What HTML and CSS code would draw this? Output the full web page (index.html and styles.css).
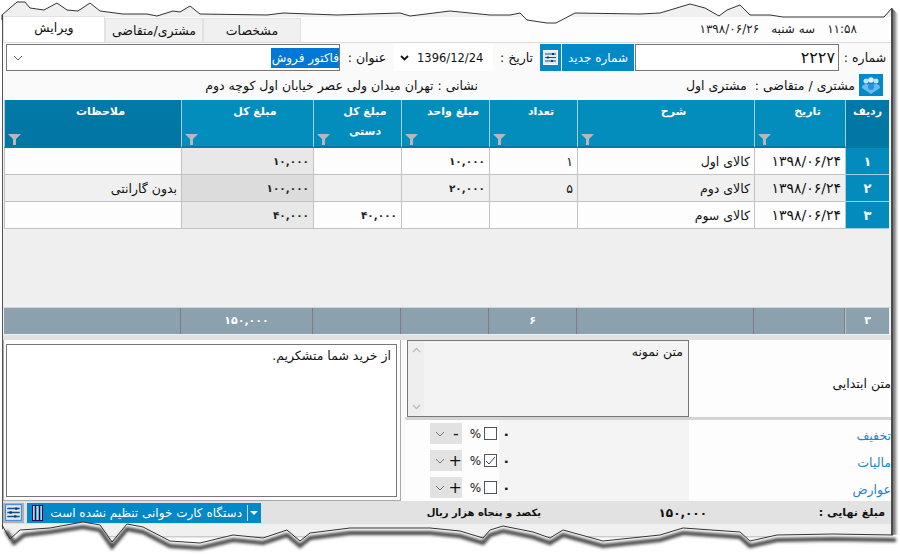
FILE: index.html
```html
<!DOCTYPE html>
<html lang="fa" dir="rtl">
<head>
<meta charset="utf-8">
<title>فاکتور فروش</title>
<link rel="stylesheet" href="styles.css">
</head>
<body>
<div class="window">
  <header class="topbar">
    <div class="clock"><span>۱۱:۵۸</span><span>سه شنبه</span><span>۱۳۹۸/۰۶/۲۶</span></div>
    <nav class="tabs">
      <div class="tab">مشخصات</div>
      <div class="tab">مشتری/متقاضی</div>
      <div class="tab tab-active">ویرایش</div>
    </nav>
  </header>

  <section class="form-row">
    <label class="lbl lbl-num">شماره :</label>
    <div class="input-num">۲۲۲۷</div>
    <button class="btn-new">شماره جدید</button>
    <button class="btn-icon"><svg width="15" height="15" viewBox="0 0 15 15"><rect x=".5" y=".5" width="14" height="14" fill="#dfeaf5" stroke="#fff"/><path d="M2 4h11M2 7.5h11M2 11h11" stroke="#1b4f7a" stroke-width="1.2"/><path d="M9 3h2v2H9zM4 6.500h2v2H4zM8 10h2v2H8z" fill="#0d3a63"/></svg></button>
    <label class="lbl lbl-date">تاریخ :</label>
    <div class="date-box"><span>1396/12/24</span><svg class="date-chev" width="9" height="6" viewBox="0 0 9 6"><path d="M1 1l3.500 3.500L8 1" fill="none" stroke="#111" stroke-width="1.800"/></svg></div>
    <label class="lbl lbl-title">عنوان :</label>
    <div class="combo"><span class="sel">فاکتور فروش</span><svg class="combo-chev" width="10" height="6" viewBox="0 0 10 6"><path d="M1 1l4 4 4-4" fill="none" stroke="#666"/></svg></div>
  </section>

  <section class="cust-row">
    <div class="cust-icon"><svg width="20" height="19" viewBox="0 0 20 19"><circle cx="5" cy="5" r="2.500" fill="#bfe6fb"/><circle cx="10" cy="4" r="2.800" fill="#d9f1ff"/><circle cx="15" cy="5" r="2.500" fill="#bfe6fb"/><path d="M1 12c0-3 2-4 4-4s4 1 5 1 3-1 5-1 4 1 4 4l-3 2-6 4-6-4z" fill="#63bdf0"/><circle cx="10" cy="11" r="3" fill="#2a8fdc"/></svg></div>
    <span class="cust-text">مشتری / متقاضی :&nbsp; مشتری اول</span>
    <span class="addr-text">نشانی : تهران میدان ولی عصر خیابان اول کوچه دوم</span>
  </section>

  <section class="grid">
    <div class="g-row g-head">
      <div class="hc hc-dark hc-idx">ردیف</div>
      <div class="hc">تاریخ<svg class="fun" width="13" height="11" viewBox="0 0 13 11"><path d="M0 0h13L8 5v6H5V5z"/></svg></div>
      <div class="hc">شرح<svg class="fun" width="13" height="11" viewBox="0 0 13 11"><path d="M0 0h13L8 5v6H5V5z"/></svg></div>
      <div class="hc">تعداد<svg class="fun" width="13" height="11" viewBox="0 0 13 11"><path d="M0 0h13L8 5v6H5V5z"/></svg></div>
      <div class="hc">مبلغ واحد<svg class="fun" width="13" height="11" viewBox="0 0 13 11"><path d="M0 0h13L8 5v6H5V5z"/></svg></div>
      <div class="hc">مبلغ کل<br>دستی<svg class="fun" width="13" height="11" viewBox="0 0 13 11"><path d="M0 0h13L8 5v6H5V5z"/></svg></div>
      <div class="hc">مبلغ کل<svg class="fun" width="13" height="11" viewBox="0 0 13 11"><path d="M0 0h13L8 5v6H5V5z"/></svg></div>
      <div class="hc hc-dark">ملاحظات<svg class="fun" width="13" height="11" viewBox="0 0 13 11"><path d="M0 0h13L8 5v6H5V5z"/></svg></div>
    </div>
    <div class="g-row g-data">
      <div class="c c-idx">۱</div><div class="c c-date">۱۳۹۸/۰۶/۲۴</div><div class="c">کالای اول</div><div class="c">۱</div><div class="c c-num">۱۰,۰۰۰</div><div class="c c-num"></div><div class="c c-calc c-num">۱۰,۰۰۰</div><div class="c"></div>
    </div>
    <div class="g-row g-data g-alt">
      <div class="c c-idx">۲</div><div class="c c-date">۱۳۹۸/۰۶/۲۴</div><div class="c">کالای دوم</div><div class="c">۵</div><div class="c c-num">۲۰,۰۰۰</div><div class="c c-num"></div><div class="c c-calc c-num">۱۰۰,۰۰۰</div><div class="c">بدون گارانتی</div>
    </div>
    <div class="g-row g-data">
      <div class="c c-idx">۳</div><div class="c c-date">۱۳۹۸/۰۶/۲۴</div><div class="c">کالای سوم</div><div class="c"></div><div class="c c-num"></div><div class="c c-num">۴۰,۰۰۰</div><div class="c c-calc c-num">۴۰,۰۰۰</div><div class="c"></div>
    </div>
    <div class="g-empty"></div>
    <div class="g-row g-foot">
      <div class="f">۳</div><div class="f"></div><div class="f"></div><div class="f">۶</div><div class="f"></div><div class="f"></div><div class="f">۱۵۰,۰۰۰</div><div class="f"></div>
    </div>
  </section>

  <div class="strip"></div>

  <section class="lower">
    <div class="lower-right">
      <div class="intro">
        <div class="intro-label">متن ابتدایی</div>
        <div class="intro-box">
          <div class="intro-text">متن نمونه</div>
          <div class="scroll"><svg width="9" height="6" viewBox="0 0 9 6"><path d="M1 5l3.500-3.500L8 5" fill="none" stroke="#bbb" stroke-width="1.400"/></svg><svg width="9" height="6" viewBox="0 0 9 6"><path d="M1 1l3.500 3.500L8 1" fill="none" stroke="#bbb" stroke-width="1.400"/></svg></div>
        </div>
      </div>
      <div class="sep"></div>
      <div class="adj">
        <a class="adj-label">تخفیف</a>
        <div class="adj-val">۰</div>
        <div class="check"></div>
        <div class="pct">%</div>
        <div class="sign-box"><span class="sign">-</span><svg width="10" height="6" viewBox="0 0 10 6"><path d="M1 1l4 4 4-4" fill="none" stroke="#777"/></svg></div>
      </div>
      <div class="adj">
        <a class="adj-label">مالیات</a>
        <div class="adj-val">۰</div>
        <div class="check"><svg width="11" height="11" viewBox="0 0 11 11"><path d="M1 6l3 3 6-7" fill="none" stroke="#444"/></svg></div>
        <div class="pct">%</div>
        <div class="sign-box"><span class="sign">+</span><svg width="10" height="6" viewBox="0 0 10 6"><path d="M1 1l4 4 4-4" fill="none" stroke="#777"/></svg></div>
      </div>
      <div class="adj">
        <a class="adj-label">عوارض</a>
        <div class="adj-val">۰</div>
        <div class="check"></div>
        <div class="pct">%</div>
        <div class="sign-box"><span class="sign">+</span><svg width="10" height="6" viewBox="0 0 10 6"><path d="M1 1l4 4 4-4" fill="none" stroke="#777"/></svg></div>
      </div>
    </div>
    <div class="lower-left">
      <div class="notes">از خرید شما متشکریم.</div>
    </div>
  </section>

  <footer class="statusbar">
    <span class="st-label">مبلغ نهایی :</span>
    <span class="st-amount">۱۵۰,۰۰۰</span>
    <span class="st-words">یکصد و پنجاه هزار ریال</span>
    <div class="st-spacer"></div>
    <div class="card">
      <span class="card-arrow"></span>
      <span class="card-text">دستگاه کارت خوانی تنظیم نشده است</span>
      <svg class="card-ico" width="11" height="16" viewBox="0 0 11 16"><rect x=".5" y=".5" width="10" height="15" fill="#8fe3f5" stroke="#2a0a45"/><path d="M3.500 0v16M7.500 0v16" stroke="#2a0a45" stroke-width="1.500"/></svg>
    </div>
    <div class="st-tool"><svg width="17" height="17" viewBox="0 0 15 15"><rect x=".5" y=".5" width="14" height="14" fill="#dfeaf5" stroke="#4c8fdc"/><path d="M2 4h11M2 7.500h11M2 11h11" stroke="#1b4f7a" stroke-width="1.200"/><path d="M9 3h2v2H9zM4 6.500h2v2H4zM8 10h2v2H8z" fill="#0d3a63"/></svg></div>
  </footer>
  <div class="below"></div>
</div>

<svg class="torn" width="900" height="554" viewBox="0 0 900 554">
  <defs><filter id="blur" x="-5%" y="-50%" width="110%" height="200%"><feGaussianBlur stdDeviation="1.500"/></filter></defs>
  <path class="rip-mask" d="M0 0H900V16L892 8L884 16L884 17L783 17L770 15L750 15L740 5L727 10L719 16L705 8L690 4L660 13L640 14L575 13L556 23L547 23L527 20L520 13L510 15L490 15L450 11L410 16L400 13L337 15L283 13L267 15L200 14L190 6L180 12L173 11L157 16L147 14L123 14L100 11L90 3L78 11L67 10L57 3L44 10L30 8L25 2L17 2L10 8L2 15L0 20Z"/>
  <path class="rip-line" d="M2 20L2 15L10 8L17 2L25 2L30 8L44 10L57 3L67 10L78 11L90 3L100 11L123 14L147 14L157 16L173 11L180 12L190 6L200 14L267 15L283 13L337 15L400 13L410 16L450 11L490 15L510 15L520 13L527 20L547 23L556 23L575 13L640 14L660 13L690 4L705 8L719 16L727 10L740 5L750 15L770 15L783 17L884 17L892 8"/>
  <path class="rip-mask" d="M0 526L10 539L20 530L50 528L83 522L100 525L112 542L127 524L143 527L170 541L200 543L233 535L263 538L287 530L300 541L310 533L350 528L430 528L460 531L483 538L490 530L503 526L533 532L550 538L563 530L603 541L660 535L683 528L740 532L750 541L777 535L833 534L893 535L900 535V554H0Z"/>
  <path class="rip-shadow" filter="url(#blur)" d="M6 531L14 543L24 535L50 532L83 527L100 530L112 547L127 529L143 532L170 546L200 548L233 540L263 543L287 535L300 546L310 538L350 533L430 533L460 536L483 543L490 535L503 531L533 537L550 543L563 535L603 546L660 540L683 533L740 537L750 546L777 540L833 539L896 540"/>
  <path class="rip-line" d="M2 525L10 539L20 530L50 528L83 522L100 525L112 542L127 524L143 527L170 541L200 543L233 535L263 538L287 530L300 541L310 533L350 528L430 528L460 531L483 538L490 530L503 526L533 532L550 538L563 530L603 541L660 535L683 528L740 532L750 541L777 535L833 534L893 535"/>
</svg>
```
FILE: styles.css
```css
* { box-sizing: border-box; }
html, body { margin: 0; padding: 0; background: #fff; }
body {
  width: 900px;
  height: 554px;
  overflow: hidden;
  position: relative;
  font-family: "DejaVu Sans", "Noto Sans", sans-serif;
  font-size: 12.500px;
  color: #111;
}
.window {
  width: 891px;
  height: 536px;
  margin-right: 7px;
  display: flex;
  flex-direction: column;
  background: #fafafa;
  border-left: 1px solid #555;
  border-right: 2px solid #4a4a4a;
  box-shadow: 3px 0 3px #777;
}
.topbar {
  height: 43px;
  flex: none;
  display: flex;
  justify-content: space-between;
  align-items: flex-end;
  background: linear-gradient(#f0f0f0 17px, #fdfdfd 17px);
  border-bottom: 1px solid #dcdcdc;
}
.clock {
  display: flex;
  gap: 12px;
  font-size: 12px;
  padding: 0 34px 6px 0;
  color: #222;
}
.tabs { display: flex; height: 26px; align-items: flex-end; }
.tab {
  width: 98px;
  height: 24px;
  display: flex;
  align-items: center;
  justify-content: center;
  background: #f0f0f0;
  border: 1px solid #e2e2e2;
  border-bottom: none;
  font-size: 12.500px;
}
.tab-active {
  width: 102px;
  height: 26px;
  background: #fff;
  padding-bottom: 4px;
}
.form-row {
  height: 30px;
  flex: none;
  display: flex;
  align-items: center;
  padding: 1px 0 2px;
}
.lbl { font-size: 12.500px; white-space: nowrap; }
.lbl-num { width: 52px; text-align: center; }
.input-num {
  width: 204px;
  height: 27px;
  background: #fff;
  border: 1px solid #777;
  font-size: 16px;
  display: flex;
  align-items: center;
  padding-right: 3px;
}
.btn-new {
  width: 72px;
  height: 27px;
  margin-right: 1px;
  background: #0388c8;
  color: #fff;
  border: none;
  font: inherit;
  font-size: 12px;
  padding: 0;
}
.btn-icon {
  width: 21px;
  height: 27px;
  margin-right: 1px;
  background: #0388c8;
  border: none;
  padding: 0;
  display: flex;
  align-items: center;
  justify-content: center;
}
.lbl-date { width: 47px; text-align: center; }
.date-box {
  width: 99px;
  height: 27px;
  background: #fff;
  display: flex;
  direction: ltr;
  flex-direction: row-reverse;
  justify-content: flex-end;
  align-items: center;
  gap: 8px;
  padding-left: 6px;
  font-size: 11.500px;
}
.lbl-title { width: 54px; text-align: center; }
.combo {
  width: 334px;
  height: 27px;
  background: #fff;
  border: 1px solid #777;
  display: flex;
  align-items: center;
  justify-content: space-between;
  padding: 0 0 0 6px;
}
.sel { background: #0078d7; color: #fff; padding: 2px 0; line-height: 16px; width: 68px; white-space: nowrap; overflow: hidden; font-size: 12px; }
.cust-row {
  height: 27px;
  flex: none;
  display: flex;
  align-items: center;
  padding-bottom: 3px;
}
.cust-icon {
  width: 24px;
  height: 22px;
  margin-right: 8px;
  background: #0388c8;
  display: flex;
  align-items: center;
  justify-content: center;
}
.cust-text { margin-right: 4px; width: 169px; white-space: nowrap; }
.addr-text { margin-right: 208px; white-space: nowrap; }
.grid {
  height: 235px;
  flex: none;
  display: flex;
  flex-direction: column;
  background: #efefef;
}
.g-row {
  display: grid;
  grid-template-columns: 44px 91px 177px 88px 88px 88px 132px 177px;
  width: 885px;
  margin-right: 2px;
}
.g-head { height: 48px; }
.hc {
  position: relative;
  background: #038dbd;
  color: #fff;
  font-weight: bold;
  font-size: 11px;
  line-height: 20px;
  text-align: center;
  padding: 2px 0 0 15px;
  border-left: 1px solid #9fcfe0;
  border-bottom: 2px solid #0478a3;
}
.hc-idx { padding-left: 0; }
.hc-dark { background: linear-gradient(#0279a8, #0176a3); }
.fun { position: absolute; left: 3px; bottom: 1px; fill: #b4b8ba; }
.g-data { height: 27px; background: #fdfdfd; }
.g-alt { background: #f0f0f0; }
.c {
  display: flex;
  align-items: center;
  padding-right: 4px;
  border-left: 1px solid #c2c2c2;
  border-bottom: 1px solid #c2c2c2;
  white-space: nowrap;
}
.c-date { font-size: 14px; }
.c-num { font-size: 10.500px; font-weight: bold; color: #222; }
.c-idx {
  background: #038bbd;
  color: #fff;
  justify-content: center;
  padding: 0;
  font-size: 13px;
  border-color: #9fcfe0;
  font-weight: bold;
}
.c-calc { background: #e8e8e8; }
.g-alt .c-calc { background: #dcdcdc; }
.g-empty { height: 79px; flex: none; border-bottom: 1px solid #d8d8d8; }
.g-foot { height: 26px; background: #8ba1ae; }
.f {
  color: #fff;
  font-size: 11px;
  font-weight: bold;
  text-align: center;
  line-height: 26px;
  border-right: 1px solid #7d7d7d;
}
.f:first-child { border-right: none; border-left: 1px solid #b4c2ca; }
.strip { height: 5px; flex: none; background: #e2e2e2; }
.lower {
  height: 161px;
  flex: none;
  display: flex;
}
.lower-right {
  width: 486px;
  flex: none;
  display: flex;
  flex-direction: column;
  background: #fdfdfd;
}
.intro { height: 77px; flex: none; display: flex; }
.intro-label {
  width: 202px;
  flex: none;
  display: flex;
  align-items: center;
  padding-top: 10px;
  white-space: nowrap;
}
.intro-box {
  width: 282px;
  flex: none;
  display: flex;
  justify-content: space-between;
  border: 1px solid #777;
  background: #f3f3f3;
}
.intro-text { padding: 3px 5px; }
.scroll {
  width: 16px;
  display: flex;
  flex-direction: column;
  justify-content: space-between;
  align-items: center;
  padding: 6px 0;
  background: #eeeeee;
}
.sep { height: 3px; flex: none; background: #d4d4d4; }
.adj { height: 27px; flex: none; display: flex; align-items: center; }
.adj-label {
  width: 202px;
  flex: none;
  align-self: stretch;
  display: flex;
  align-items: center;
  padding-top: 4px;
  color: #1f86c4;
}
.adj-val {
  width: 190px;
  flex: none;
  align-self: stretch;
  background: #f4f4f4;
  display: flex;
  align-items: center;
  justify-content: flex-end;
  padding-left: 3px;
  font-weight: bold;
  font-size: 14px;
}
.check {
  width: 13px;
  height: 13px;
  margin-right: 2px;
  border: 1px solid #555;
  background: #fdfdfd;
  display: flex;
  align-items: center;
  justify-content: center;
}
.pct { width: 13px; margin-right: 2px; text-align: center; font-size: 12px; }
.sign-box {
  width: 32px;
  height: 21px;
  margin-right: 7px;
  background: #e2e2e2;
  display: flex;
  align-items: center;
  justify-content: space-between;
  padding: 0 0 0 5px;
}
.sign { font-size: 16px; width: 12px; text-align: center; line-height: 1; }
.lower-left {
  width: 398px;
  margin-right: 4px;
  flex: none;
  padding: 4px 3px 3px 2px;
  background: #fdfdfd;
  border-left: 1px solid #aaa;
  border-right: 1px solid #aaa;
  border-bottom: 1px solid #aaa;
}
.notes {
  height: 100%;
  background: #fff;
  border: 1px solid #777;
  padding: 3px 5px;
}
.statusbar {
  height: 23px;
  flex: none;
  display: flex;
  align-items: center;
  background: #e2e2e2;
  font-weight: bold;
  font-size: 10px;
}
.st-label { width: 88px; padding-right: 6px; white-space: nowrap; font-size: 11px; }
.st-amount { width: 47px; margin-right: 96px; font-size: 12px; white-space: nowrap; }
.st-words { width: 114px; margin-right: 119px; white-space: nowrap; }
.st-spacer { width: 166px; flex: none; }
.card {
  width: 234px;
  height: 20px;
  flex: none;
  background: #0388c8;
  color: #fff;
  font-weight: normal;
  font-size: 12px;
  display: flex;
  align-items: center;
  padding-right: 3px;
  white-space: nowrap;
  overflow: hidden;
}
.card-arrow {
  width: 11px;
  height: 16px;
  flex: none;
  position: relative;
  border-left: 1.500px solid #cfd4d8;
}
.card-arrow::after {
  content: "";
  position: absolute;
  top: 6px;
  right: 0;
  border: 4px solid transparent;
  border-top: 4px solid #fff;
  border-bottom: none;
}
.card-text { flex: 1; padding-right: 5px; }
.card-ico { margin-left: 5px; flex: none; }
.st-tool {
  width: 21px;
  height: 20px;
  flex: none;
  margin-right: 3px;
  background: #b0b0b0;
  display: flex;
  align-items: center;
  justify-content: center;
}
.below { flex: 1; background: #f0f0f0; }
.torn {
  position: absolute;
  left: 0;
  top: 0;
  pointer-events: none;
}
.rip-mask { fill: #fff; }
.rip-line { fill: none; stroke: #333; stroke-width: 1; }
.rip-shadow { fill: none; stroke: #444; stroke-width: 4; }
```
